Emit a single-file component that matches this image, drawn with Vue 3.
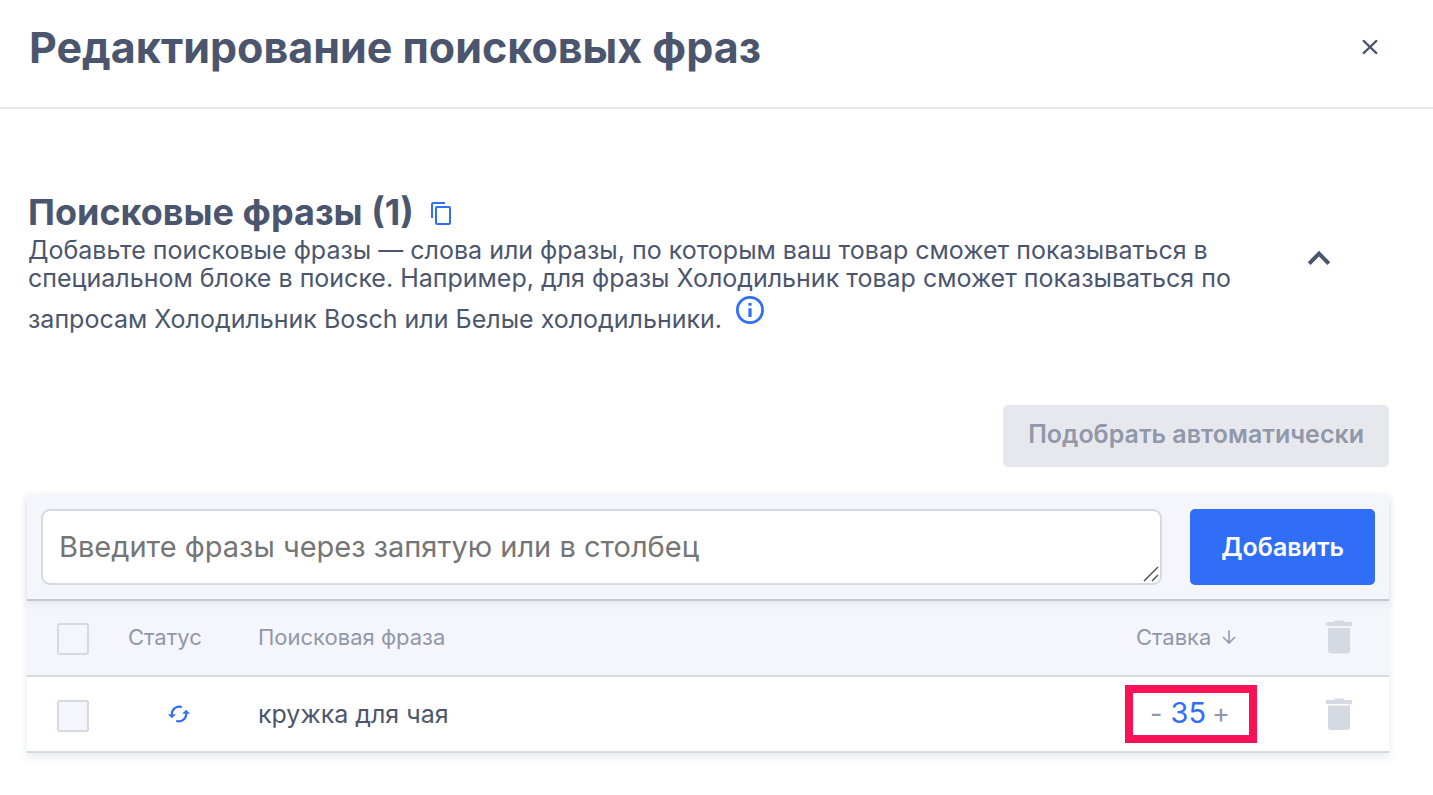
<template>
  <div class="modal">
    <header class="modal-header">
      <h1>Редактирование поисковых фраз</h1>
      <button class="icon-button close" type="button" aria-label="Закрыть">
        <svg width="16" height="16" viewBox="0 0 16 16" fill="none" stroke="currentColor" stroke-width="2.2" stroke-linecap="round">
          <path d="M1.6 1.9 14.4 14.1M14.4 1.9 1.6 14.1" />
        </svg>
      </button>
    </header>

    <main class="modal-body">
      <section class="intro">
        <div class="intro-text">
          <div class="title-row">
            <h2>Поисковые фразы ({{ phrases.length }})</h2>
            <button class="icon-button copy" type="button" aria-label="Скопировать фразы">
              <svg width="22" height="24" viewBox="0 0 22 24" fill="none" stroke="currentColor" stroke-width="2">
                <path d="M2 17V3.2Q2 2 3.2 2H15" />
                <rect x="6" y="6" width="14" height="17" rx="1" />
              </svg>
            </button>
          </div>
          <p>
            Добавьте поисковые фразы — слова или фразы, по которым ваш товар сможет показываться в
            специальном блоке в поиске. Например, для фразы Холодильник товар сможет показываться по
            запросам Холодильник Bosch или Белые холодильники.
            <button class="icon-button info" type="button" aria-label="Подробнее">
              <svg width="28" height="28" viewBox="0 0 28 28" fill="none">
                <circle cx="14" cy="14" r="12.6" stroke="currentColor" stroke-width="2.8" />
                <path d="M12.4 7h3.2v2.8h-3.2zM12.4 12.2h3.2V21h-3.2z" fill="currentColor" />
              </svg>
            </button>
          </p>
        </div>
        <button class="icon-button collapse" type="button" aria-label="Свернуть">
          <svg width="24" height="16" viewBox="0 0 24 16" fill="none" stroke="currentColor" stroke-width="4">
            <path d="M2.2 13.6 12 3.6l9.8 10" />
          </svg>
        </button>
      </section>

      <div class="actions">
        <button class="auto-button" type="button" disabled>Подобрать автоматически</button>
      </div>

      <div class="panel">
        <form class="add-form" @submit.prevent="addPhrases">
          <div class="field">
            <textarea v-model="draft" rows="1" aria-label="Поисковые фразы" placeholder="Введите фразы через запятую или в столбец"></textarea>
            <svg class="grip" width="16" height="16" viewBox="0 0 16 16" fill="none" stroke="#555" stroke-width="1.5">
              <path d="M1 15 15 1M9 15l6-6" />
            </svg>
          </div>
          <button class="add-button" type="submit">Добавить</button>
        </form>

        <table>
          <thead>
            <tr>
              <th class="col-check"><input v-model="allChecked" type="checkbox" aria-label="Выбрать все" /></th>
              <th class="col-status">Статус</th>
              <th>Поисковая фраза</th>
              <th class="col-bid">
                <button class="sort-button" type="button">
                  Ставка
                  <svg width="14" height="14" viewBox="0 0 14 14" fill="none" stroke="currentColor" stroke-width="1.6">
                    <path d="M7 .5v12M1 7l6 6 6-6" />
                  </svg>
                </button>
              </th>
              <th class="col-remove">
                <button class="icon-button trash" type="button" aria-label="Удалить выбранные">
                  <svg width="26" height="34" viewBox="0 0 26 34" fill="currentColor">
                    <path d="M0 2h7.5L9 .4h8L18.5 2H26v4H0zM2 8h22v22.5q0 3-3 3H5q-3 0-3-3z" />
                  </svg>
                </button>
              </th>
            </tr>
          </thead>
          <tbody>
            <tr v-for="phrase in phrases" :key="phrase.text">
              <td class="col-check"><input v-model="phrase.checked" type="checkbox" :aria-label="phrase.text" /></td>
              <td class="col-status">
                <svg class="sync" width="22" height="18" viewBox="0 0 22 18">
                  <path d="M13.8 2.2A7.2 7.2 0 0 0 3.9 9.5M8.200 15.8A7.2 7.2 0 0 0 18.1 8.5" fill="none" stroke="currentColor" stroke-width="2.2" />
                  <path d="M0 9.2h7.8L3.9 13.2zM14.2 8.8H22L18.1 4.8z" fill="currentColor" />
                </svg>
              </td>
              <td class="phrase">{{ phrase.text }}</td>
              <td class="col-bid">
                <div class="bid">
                  <button class="step" type="button" aria-label="Уменьшить ставку" @click="phrase.bid--">-</button>
                  <span class="bid-value">{{ phrase.bid }}</span>
                  <button class="step" type="button" aria-label="Увеличить ставку" @click="phrase.bid++">+</button>
                </div>
              </td>
              <td class="col-remove">
                <button class="icon-button trash" type="button" aria-label="Удалить фразу" @click="removePhrase(phrase)">
                  <svg width="26" height="34" viewBox="0 0 26 34" fill="currentColor">
                    <path d="M0 3h7.5L9 1.4h8L18.5 3H26v4H0zM2 8.500h22V30q0 3-3 3H5q-3 0-3-3z" />
                  </svg>
                </button>
              </td>
            </tr>
          </tbody>
        </table>
      </div>
    </main>
  </div>
</template>

<script setup>
import { ref, computed } from 'vue'

const draft = ref('')

const phrases = ref([
  { text: 'кружка для чая', bid: 35, checked: false }
])

const allChecked = computed({
  get: () => phrases.value.length > 0 && phrases.value.every((p) => p.checked),
  set: (value) => phrases.value.forEach((p) => { p.checked = value })
})

const addPhrases = () => {
  const items = draft.value.split(/[,\n]/).map((s) => s.trim()).filter(Boolean)
  items.forEach((text) => {
    if (!phrases.value.some((p) => p.text === text)) {
      phrases.value.push({ text, bid: 35, checked: false })
    }
  })
  draft.value = ''
}

const removePhrase = (phrase) => {
  phrases.value = phrases.value.filter((p) => p !== phrase)
}
</script>

<style>
body {
  margin: 0;
  background: #fff;
}
</style>

<style scoped>
.modal {
  font-family: Inter, "Liberation Sans", sans-serif;
  color: #4b566e;
}

button {
  font-family: inherit;
  cursor: pointer;
}

.icon-button {
  display: inline-flex;
  padding: 0;
  border: none;
  background: none;
  color: inherit;
}

.modal-header {
  display: flex;
  align-items: center;
  justify-content: space-between;
  padding: 20px 55px 33px 29px;
  border-bottom: 2px solid #e7e8ee;
}

h1 {
  margin: 0;
  font-size: 43px;
  line-height: 54px;
  font-weight: 700;
}

.modal-body {
  padding: 80px 44px 40px 27px;
}

.intro {
  display: flex;
  align-items: center;
  justify-content: space-between;
  padding: 0 58px 0 1px;
}

.intro-text {
  max-width: 1230px;
}

.title-row {
  display: flex;
  align-items: center;
  gap: 16px;
}

h2 {
  margin: 0;
  font-size: 36px;
  line-height: 47px;
  font-weight: 700;
}

.copy {
  color: #306ef7;
}

p {
  margin: 0;
  font-size: 25px;
  line-height: 28px;
}

.info {
  margin: 4px 0 0 7px;
  vertical-align: 4px;
  color: #306ef7;
}

.collapse {
  padding-bottom: 6px;
}

.actions {
  display: flex;
  justify-content: flex-end;
  margin: 72px 0 28px;
}

.auto-button {
  padding: 14px 25px 18px;
  border: none;
  border-radius: 5px;
  background: #e7e8ee;
  color: #9098aa;
  font-size: 25px;
  line-height: 30px;
  font-weight: 600;
  cursor: default;
}

.panel {
  box-shadow: 0 4px 8px rgba(60, 70, 90, 0.12);
}

.add-form {
  position: relative;
  display: flex;
  gap: 28px;
  padding: 14px;
  border-bottom: 2px solid #c3c9d3;
  background: #f5f6fb;
  box-shadow: 0 2px 8px rgba(60, 70, 90, 0.1);
}

.field {
  position: relative;
  display: flex;
  flex: 1;
}

textarea {
  flex: 1;
  box-sizing: border-box;
  height: 76px;
  padding: 18px 16px;
  border: 2px solid #d5d9e2;
  border-radius: 9px;
  background: #fff;
  color: #4b566e;
  font-family: inherit;
  font-size: 29px;
  line-height: 36px;
  resize: vertical;
}

textarea::placeholder {
  color: #757575;
}

textarea::-webkit-resizer {
  background: transparent;
}

.grip {
  position: absolute;
  right: 3px;
  bottom: 3px;
  pointer-events: none;
}

.add-button {
  padding: 0 31px;
  border: none;
  border-radius: 5px;
  background: #306ef7;
  color: #fff;
  font-size: 25px;
  font-weight: 600;
}

table {
  width: 100%;
  border-collapse: separate;
  border-spacing: 0;
  table-layout: fixed;
}

th,
td {
  height: 74px;
  padding: 0;
  border-bottom: 2px solid #d5d9e2;
  text-align: left;
}

th {
  height: 72px;
  padding-bottom: 2px;
  background: #f5f6fb;
  color: #9098aa;
  font-size: 22px;
  font-weight: 400;
}

td {
  background: #fff;
}

.col-check {
  width: 101px;
}

.col-status {
  width: 130px;
}

.col-bid {
  width: 164px;
}

.col-remove {
  width: 100px;
  text-align: center;
}

input[type="checkbox"] {
  appearance: none;
  display: block;
  box-sizing: border-box;
  width: 32px;
  height: 32px;
  margin: 3px 0 0 30px;
  border: 2px solid #d5d9e2;
  border-radius: 3px;
  background: #f5f6fb;
}

input[type="checkbox"]:checked {
  background: #306ef7;
}

.sync {
  display: block;
  margin-left: 40px;
  color: #306ef7;
}

.phrase {
  font-size: 25px;
}

.sort-button {
  display: flex;
  align-items: center;
  gap: 11px;
  padding: 0 0 0 11px;
  border: none;
  background: none;
  color: inherit;
  font-size: 22px;
}

.trash {
  color: #d5d9e2;
  vertical-align: middle;
}

.bid {
  display: flex;
  align-items: center;
  justify-content: center;
  gap: 6px;
  box-sizing: border-box;
  width: 132px;
  height: 58px;
  padding-right: 2px;
  border: 8px solid #fa1156;
}

.bid-value {
  padding: 0 0 2px 2px;
  color: #306ef7;
  font-size: 29px;
  line-height: 36px;
}

.step {
  padding: 0;
  border: none;
  background: none;
  color: #9098aa;
  font-size: 27px;
  line-height: 36px;
}
</style>
